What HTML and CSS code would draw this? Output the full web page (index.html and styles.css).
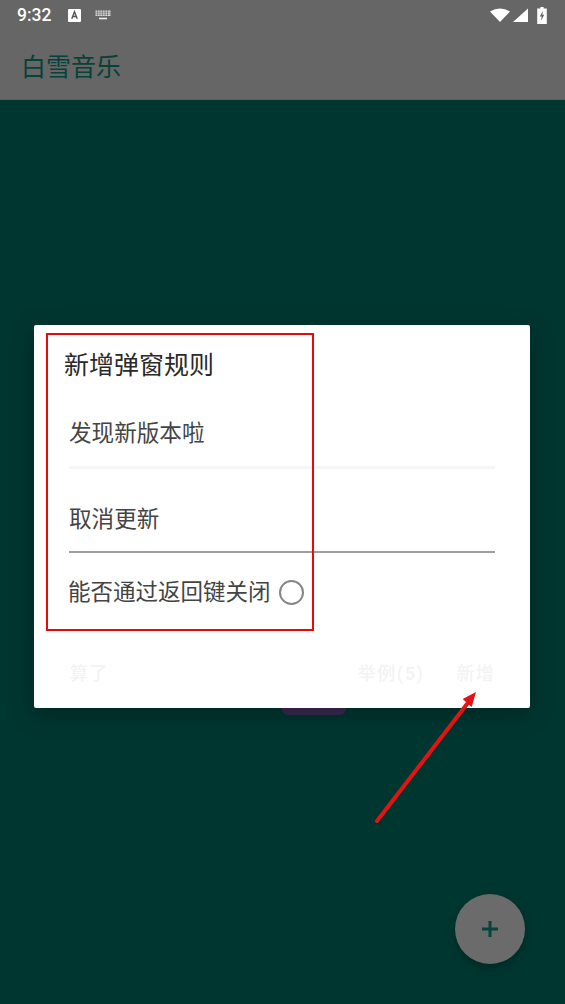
FILE: index.html
```html
<!DOCTYPE html>
<html lang="zh-CN">
<head>
    <meta charset="UTF-8">
    <title>白雪音乐</title>
    <link rel="stylesheet" href="styles.css">
</head>
<body>

    <div class="screen">
        <div class="appbar">
            <div class="statusbar">
                <span class="clock">9:32</span>
                <svg class="status-a" width="13" height="13" viewBox="0 0 12 12">
                    <rect width="12" height="12" rx="1" fill="#fff"/>
                    <path d="M3.500 9 L6 2.500 L8.500 9 M4.400 6.900 H7.600" fill="none" stroke="#555" stroke-width="1.300"/>
                </svg>
                <svg class="status-kb" width="16" height="10" viewBox="0 0 16 10">
                    <path d="M0.500 0.500 H15.500 V6 H0.500 Z" fill="#ddd"/>
                    <path d="M0 2.200 H16 M0 4.200 H16 M2.500 0 V6 M5 0 V6 M7.500 0 V6 M10 0 V6 M12.500 0 V6" stroke="#666" stroke-width="0.600"/>
                    <rect x="4" y="7.700" width="8" height="1.600" fill="#eee"/>
                </svg>
                <span class="status-right">
                    <svg width="20" height="14" viewBox="0 0 20 14"><path d="M0 3.500 Q10 -2.500 20 3.500 L10 14 Z" fill="#fff"/></svg>
                    <svg width="15" height="14" viewBox="0 0 15 14"><path d="M15 0.500 V14 H0 Z" fill="#fff"/></svg>
                    <svg width="10" height="17" viewBox="0 0 9 16">
                        <path d="M3 0 H6 V1.500 H9 V16 H0 V1.500 H3 Z" fill="#fff"/>
                        <path d="M5.400 3.500 L2.400 9 H4.200 L3.600 13 L6.600 7.200 H4.800 Z" fill="#666"/>
                    </svg>
                </span>
            </div>
            <div class="toolbar">白雪音乐</div>
        </div>

        <div class="content">
            <div class="hidden-pill"></div>
            <div class="fab">
                <svg width="16" height="16" viewBox="0 0 16 16"><path d="M8 0 V16 M0 8 H16" stroke="#05453d" stroke-width="3"/></svg>
            </div>
        </div>

        <div class="dialog">
            <h2 class="dialog-title">新增弹窗规则</h2>
            <div class="field field-idle"><span class="field-text">发现新版本啦</span></div>
            <div class="field field-active"><span class="field-text">取消更新</span></div>
            <div class="switch-row">
                <span>能否通过返回键关闭</span>
                <span class="radio"></span>
            </div>
            <div class="actions">
                <span class="action">算了</span>
                <span class="action action-right">举例(5)</span>
                <span class="action">新增</span>
            </div>
        </div>

        <!-- annotations drawn on top of the screenshot -->
        <div class="mark-box"></div>
        <svg class="mark-arrow" width="110" height="135" viewBox="0 0 110 135">
            <path d="M2 132 L92 15" stroke="#e41313" stroke-width="4" stroke-linecap="round"/>
            <path d="M101 3 L96.700 18 L92 14 L87.700 10 Z" fill="#e41313"/>
        </svg>
    </div>

</body>
</html>
```

FILE: styles.css
```css
html, body {
    margin: 0;
    padding: 0;
}

body {
    font-family: Roboto, "Noto Sans CJK SC", sans-serif;
    background-color: #003630;
}

.screen {
    position: relative;
    width: 565px;
    height: 1004px;
    overflow: hidden;
    display: flex;
    flex-direction: column;
}

.appbar {
    height: 100px;
    background-color: #666666;
    box-sizing: border-box;
    border-bottom: 1px solid #5b5f5e;
}

.statusbar {
    height: 30px;
    display: flex;
    align-items: center;
    padding: 0 18px 0 17px;
    color: #fff;
}

.clock {
    font-size: 17.500px;
    font-weight: 500;
    width: 51px;
}

.status-kb {
    margin-left: 14px;
}

.status-right {
    margin-left: auto;
    display: flex;
    align-items: center;
    gap: 3px;
}

.status-right svg:last-child {
    margin-left: 6px;
}

.toolbar {
    height: 69px;
    box-sizing: border-box;
    padding: 5px 0 0 21px;
    line-height: 65px;
    font-size: 25px;
    color: #054239;
}

.content {
    flex: 1;
    position: relative;
    background-color: #003630;
}

.hidden-pill {
    position: absolute;
    left: 282px;
    top: 600px;
    width: 64px;
    height: 15px;
    border-radius: 0 0 6px 6px;
    background-color: #3a2a52;
}

.fab {
    position: absolute;
    right: 40px;
    bottom: 40px;
    width: 70px;
    height: 70px;
    border-radius: 50%;
    background-color: #6b6b6b;
    display: flex;
    align-items: center;
    justify-content: center;
    box-shadow: 0 4px 8px rgba(0, 0, 0, 0.25);
}

.dialog {
    position: absolute;
    left: 34px;
    top: 325px;
    width: 496px;
    height: 383px;
    box-sizing: border-box;
    padding: 0 35px 0 30px;
    background-color: #fff;
    border-radius: 2px;
    box-shadow: 0 6px 24px rgba(0, 0, 0, 0.3);
    display: flex;
    flex-direction: column;
}

.dialog-title {
    margin: 0;
    padding-top: 25px;
    font-size: 25px;
    line-height: 32px;
    font-weight: 400;
    color: #2a2a2a;
}

.field {
    margin-left: 5px;
    box-sizing: border-box;
    font-size: 22.600px;
    line-height: 30px;
    color: #444;
}

.field-text {
    display: block;
}

.field-idle {
    height: 50px;
    margin-top: 37px;
    border-bottom: 3px solid #f5f5f5;
}

.field-active {
    height: 48px;
    margin-top: 36px;
    border-bottom: 2px solid #9e9e9e;
}

.switch-row {
    margin-left: 4px;
    margin-top: 24px;
    display: flex;
    align-items: center;
    gap: 8px;
    font-size: 22.500px;
    line-height: 30px;
    color: #444;
}

.radio {
    width: 21px;
    height: 21px;
    border: 2px solid #858585;
    border-radius: 50%;
}

.actions {
    margin-top: 54px;
    margin-left: 6px;
    display: flex;
    font-size: 18px;
    font-weight: 500;
    line-height: 26px;
    letter-spacing: 1.300px;
    color: #f3f3f3;
}

.action-right {
    margin-left: auto;
    margin-right: 32px;
    letter-spacing: 1.600px;
}

.mark-box {
    position: absolute;
    left: 46px;
    top: 333px;
    width: 264px;
    height: 294px;
    border: 2px solid #e60b0b;
}

.mark-arrow {
    position: absolute;
    left: 375px;
    top: 689px;
}
```
